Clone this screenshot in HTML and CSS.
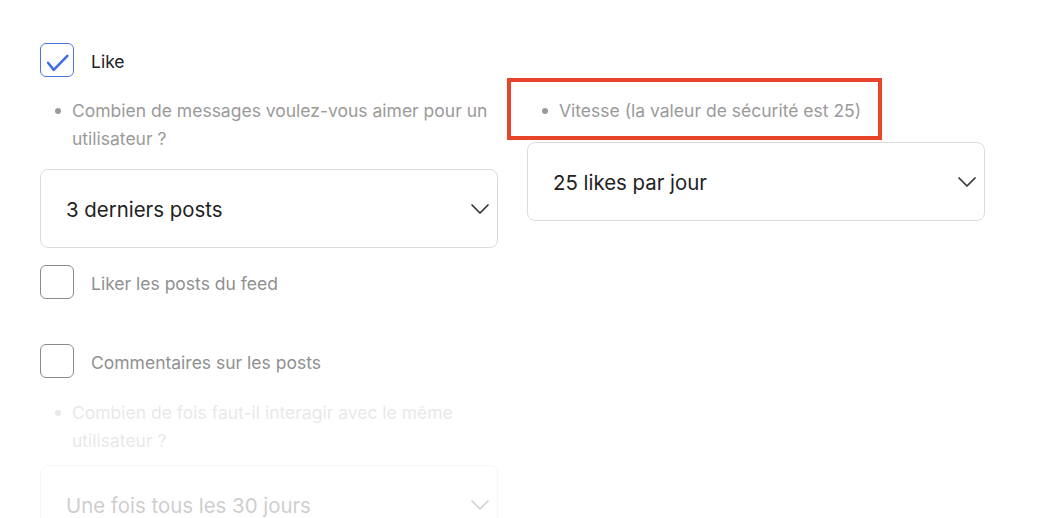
FILE: index.html
```html
<!DOCTYPE html>
<html lang="fr">
<head>
<meta charset="utf-8">
<link rel="stylesheet" href="styles.css">
</head>
<body>
<div class="page">
  <div class="col col-left">
    <label class="check-row">
      <span class="box checked">
        <svg viewBox="0 0 34 34" width="34" height="34"><path d="M7.5 20 L13.5 27.5 L28 12.5" fill="none" stroke="#3f6fe6" stroke-width="2.7" stroke-linecap="round" stroke-linejoin="round"/></svg>
      </span>
      <span class="label dark">Like</span>
    </label>
    <ul class="hint hint-first"><li>Combien de messages voulez-vous aimer pour un utilisateur ?</li></ul>
    <div class="select sel-first"><span>3 derniers posts</span>
      <svg class="chev" viewBox="0 0 20 12" width="20" height="12"><path d="M2 2 L10 10 L18 2" fill="none" stroke="#333" stroke-width="1.7" stroke-linecap="round" stroke-linejoin="round"/></svg>
    </div>
    <label class="check-row row-feed">
      <span class="box"></span>
      <span class="label">Liker les posts du feed</span>
    </label>
    <label class="check-row row-comments">
      <span class="box"></span>
      <span class="label">Commentaires sur les posts</span>
    </label>
    <div class="faded">
      <ul class="hint hint-faded"><li>Combien de fois faut-il interagir avec le même utilisateur ?</li></ul>
      <div class="select sel-faded"><span>Une fois tous les 30 jours</span>
        <svg class="chev" viewBox="0 0 20 12" width="20" height="12"><path d="M2 2 L10 10 L18 2" fill="none" stroke="#333" stroke-width="1.7" stroke-linecap="round" stroke-linejoin="round"/></svg>
      </div>
    </div>
  </div>
  <div class="col col-right">
    <div class="annotated">
      <ul class="hint hint-right"><li>Vitesse (la valeur de sécurité est 25)</li></ul>
      <div class="highlight"></div>
    </div>
    <div class="select sel-right"><span>25 likes par jour</span>
      <svg class="chev" viewBox="0 0 20 12" width="20" height="12"><path d="M2 2 L10 10 L18 2" fill="none" stroke="#333" stroke-width="1.7" stroke-linecap="round" stroke-linejoin="round"/></svg>
    </div>
  </div>
</div>
</body>
</html>
```

FILE: styles.css
```css
* { box-sizing: border-box; }
html, body { margin: 0; background: #fff; }
body {
  font-family: Inter, "Noto Sans", "Liberation Sans", sans-serif;
  color: #222;
  height: 518px;
  overflow: hidden;
}
.page {
  display: flex;
  gap: 29px;
  padding: 43px 0 0 40px;
}
.col { width: 458px; display: flex; flex-direction: column; }
.check-row { display: flex; align-items: center; gap: 17px; height: 34px; }
.box {
  width: 34px; height: 34px; flex: none;
  border: 1px solid #8a8a8a; border-radius: 6px;
  display: flex; align-items: center; justify-content: center;
}
.box.checked { border-color: #4a76e8; }
.box svg { display: block; }
.label { font-size: 17.5px; color: #909090; padding-top: 2px; }
.label.dark { color: #222; }
.hint {
  list-style: none; margin: 0; padding: 0 10px 0 32px;
  font-size: 17.5px; line-height: 28px; color: #9a9a9a;
}
.hint li { position: relative; }
.hint li::before {
  content: ""; position: absolute; left: -17px; top: 11px;
  width: 6px; height: 6px; border-radius: 50%; background: #9a9a9a;
}
.hint-first { margin-top: 20px; }
.select {
  height: 79px; border: 1px solid #dcdcdc; border-radius: 8px;
  display: flex; align-items: center; justify-content: space-between;
  padding: 2px 7px 0 25px; font-size: 20.4px; color: #222;
}
.sel-first { margin-top: 16px; }
.chev { display: block; margin-top: -2px; }
.row-feed { margin-top: 17px; }
.row-comments { margin-top: 45px; }
.faded { opacity: 0.22; }
.hint-faded { margin-top: 21px; }
.sel-faded { margin-top: 10px; }
.annotated { position: relative; margin-top: 54px; }
.highlight {
  position: absolute; left: -20px; top: -19px; width: 375px; height: 62px;
  border: 4px solid #e8432b;
}
.sel-right { margin-top: 17px; }
```
